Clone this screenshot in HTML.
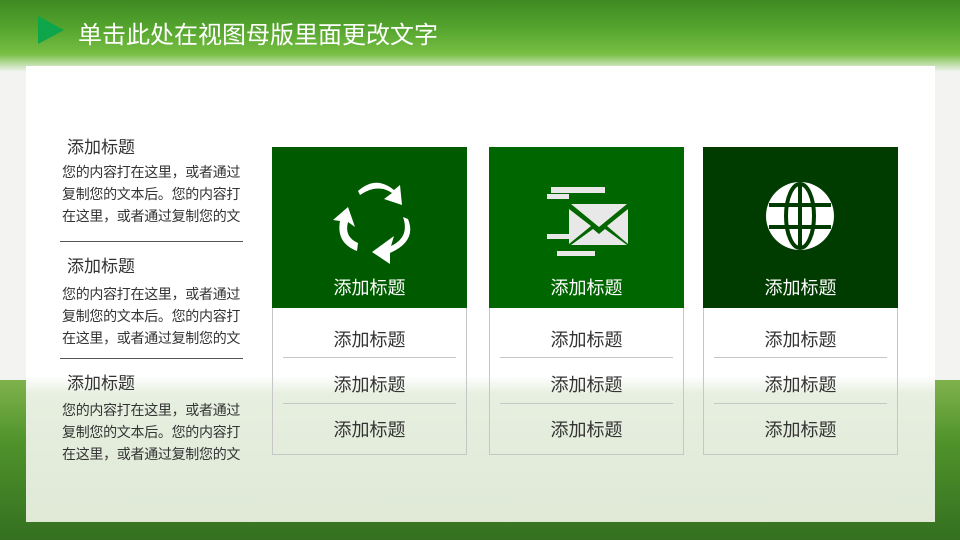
<!DOCTYPE html>
<html><head><meta charset="utf-8"><style>
*{margin:0;padding:0;box-sizing:border-box}
body{width:960px;height:540px;overflow:hidden;position:relative;background:#f3f4f2;font-family:"Liberation Sans","Noto Sans CJK SC",sans-serif}
.top{position:absolute;left:0;top:0;width:960px;height:72px;background:linear-gradient(180deg,#3f8a22 0%,#55a52e 40%,#78bf44 75%,rgba(140,200,90,0) 100%)}
.bot{position:absolute;left:0;top:380px;width:960px;height:160px;background:linear-gradient(180deg,#7fb24c 0%,#4f922a 40%,#347020 100%)}
.panel{position:absolute;left:26px;top:66px;width:909px;height:456px;background:linear-gradient(180deg,#fff 0%,#fff 68%,#e7efe0 72%,#dfe9d6 100%)}
.title{position:absolute;left:78px;top:15px;color:#fff;font-size:24px}
.tri{position:absolute;left:38px;top:16px;width:0;height:0;border-top:14px solid transparent;border-bottom:14px solid transparent;border-left:26px solid #0ea64b}
.lt{position:absolute;left:67px;font-size:17px;color:#333}
.lb{position:absolute;left:62px;width:188px;font-size:14px;line-height:22px;color:#333;letter-spacing:-0.3px}
.rule{position:absolute;left:60px;width:183px;height:1px;background:#555}
.card{position:absolute;top:147px;width:195px;height:308px;border:1px solid #c6c6c6;border-top:none}
.hd{position:absolute;left:-1px;top:0;width:195px;height:161px}
.hd span{position:absolute;left:0;width:100%;top:127px;text-align:center;color:#fff;font-size:18px}
.row{position:absolute;left:0;width:100%;text-align:center;font-size:18px;color:#333}
.ln{position:absolute;left:10px;right:10px;height:1px;background:#c6c6c6}
svg{position:absolute}
</style></head><body>
<div class="top"></div><div class="bot"></div>
<div class="panel"></div>
<div class="tri"></div>
<div class="title">单击此处在视图母版里面更改文字</div>

<div class="lt" style="top:133px">添加标题</div>
<div class="lb" style="top:161px">您的内容打在这里，或者通过复制您的文本后。您的内容打在这里，或者通过复制您的文</div>
<div class="rule" style="top:241px"></div>
<div class="lt" style="top:252px">添加标题</div>
<div class="lb" style="top:283px">您的内容打在这里，或者通过复制您的文本后。您的内容打在这里，或者通过复制您的文</div>
<div class="rule" style="top:358px"></div>
<div class="lt" style="top:369px">添加标题</div>
<div class="lb" style="top:399px">您的内容打在这里，或者通过复制您的文本后。您的内容打在这里，或者通过复制您的文</div>

<div class="card" style="left:272px">
 <div class="hd" style="background:#005a00"><span>添加标题</span>
 <svg width="195" height="161" viewBox="0 0 195 161"><g fill="#fff">
  <path d="M88 48 Q105 36 120 46 L112 52 L130 58 L128 38 L122 43 Q104 28 86 44Z"/>
  <path d="M76 60 L61 73 L68 74 Q64 96 85 104 L86 96 Q72 90 76 75 L83 80Z"/>
  <path d="M131 70 Q138 90 119 99 L122 89 L100 105 L118 117 L118 106 Q145 94 136 72Z"/>
 </g></svg></div>
 <div class="row" style="top:179px">添加标题</div><div class="ln" style="top:210px"></div>
 <div class="row" style="top:224px">添加标题</div><div class="ln" style="top:256px"></div>
 <div class="row" style="top:269px">添加标题</div>
</div>

<div class="card" style="left:489px">
 <div class="hd" style="background:#006600"><span>添加标题</span>
 <svg width="195" height="161" viewBox="0 0 195 161"><g fill="#e8e8e8">
  <rect x="62" y="40" width="54" height="6"/><rect x="58" y="47" width="22" height="5"/>
  <path d="M82 57 H138 L110 80Z"/><path d="M80 62 L102 79 L80 97Z"/><path d="M139 62 V97 L118 79Z"/>
  <path d="M82 98 L104 82 L110 87 L116 82 L138 98Z"/>
  <rect x="58" y="87" width="22" height="5"/><rect x="68" y="104" width="38" height="5"/>
 </g></svg></div>
 <div class="row" style="top:179px">添加标题</div><div class="ln" style="top:210px"></div>
 <div class="row" style="top:224px">添加标题</div><div class="ln" style="top:256px"></div>
 <div class="row" style="top:269px">添加标题</div>
</div>

<div class="card" style="left:703px">
 <div class="hd" style="background:#003b00"><span>添加标题</span>
 <svg width="195" height="161" viewBox="0 0 195 161"><g fill="none" stroke="#fff" stroke-width="5">
  <circle cx="97" cy="69" r="34" fill="#fff" stroke="none"/>
  <g stroke="#003b00" stroke-width="4">
   <ellipse cx="97" cy="69" rx="14" ry="32"/>
   <line x1="97" y1="36" x2="97" y2="102"/>
   <line x1="66" y1="58" x2="128" y2="58"/><line x1="66" y1="80" x2="128" y2="80"/>
  </g>
 </g></svg></div>
 <div class="row" style="top:179px">添加标题</div><div class="ln" style="top:210px"></div>
 <div class="row" style="top:224px">添加标题</div><div class="ln" style="top:256px"></div>
 <div class="row" style="top:269px">添加标题</div>
</div>
</body></html>
